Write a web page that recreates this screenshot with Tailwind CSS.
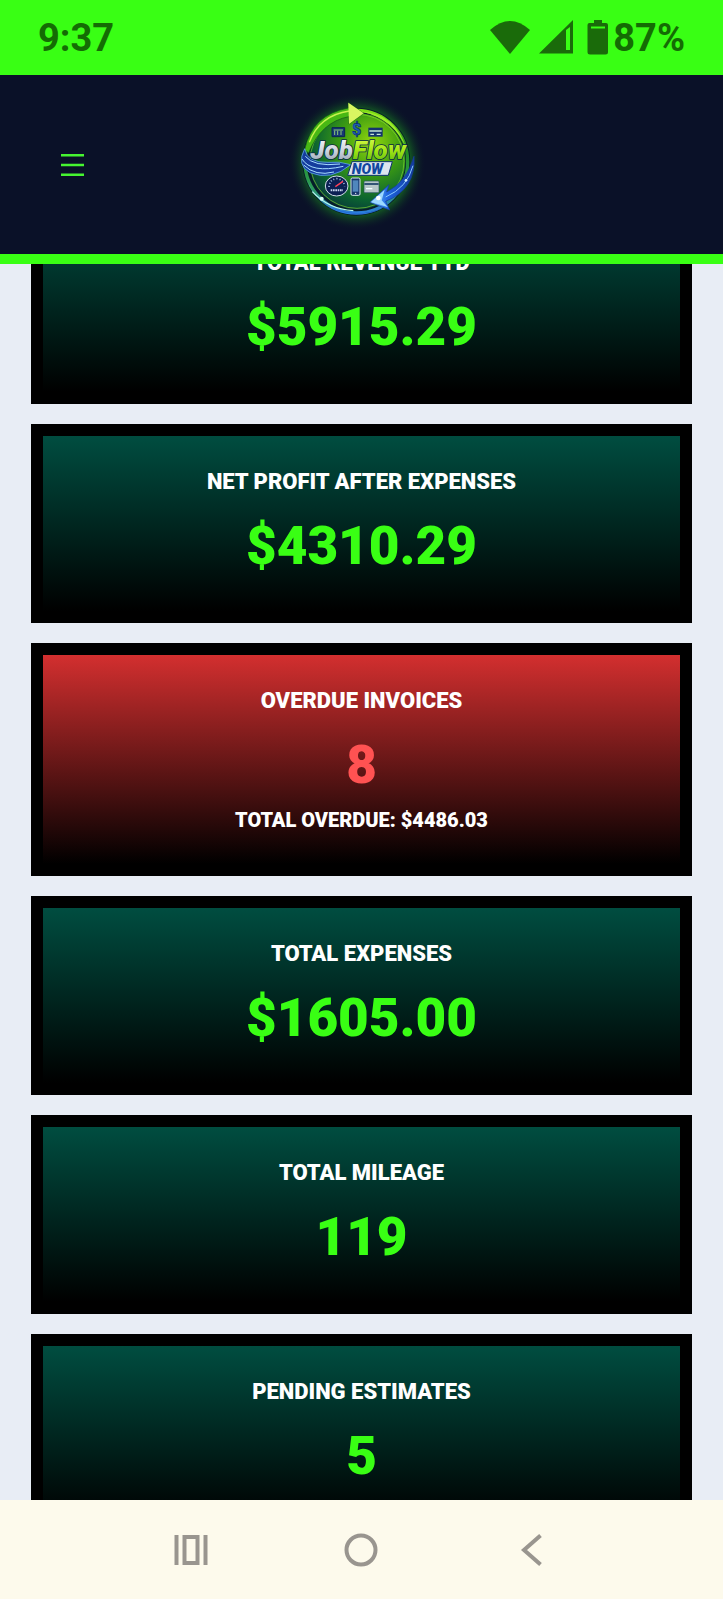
<!DOCTYPE html>
<html lang="en">
<head>
  <meta charset="UTF-8">
  <meta name="viewport" content="width=device-width, initial-scale=1.0">
  <title>JobFlow Now</title>
  <script src="https://cdn.jsdelivr.net/npm/@tailwindcss/browser@4"></script>
</head>
<body class="h-screen flex flex-col overflow-hidden bg-[#e8edf5] font-['Roboto',sans-serif] font-bold">

  <!-- Status bar -->
  <div class="shrink-0 h-[75px] px-[38px] flex items-center justify-between bg-[#39ff14] text-[#146c04] text-[38px] leading-[44px]">
    <span>9:37</span>
    <div class="flex items-center">
      <svg class="w-10 h-9 mr-[9px]" viewBox="0 1 40 36" fill="#1a6b0a"><path d="M0 11Q20 -7 40 11L20 35Z"/></svg>
      <svg class="w-[34px] h-9 mr-[14px]" viewBox="0 2 34 36"><path fill="#1a6b0a" fill-rule="evenodd" d="M0 35.500L34 2V35.500ZM27 12V32H31V9Z"/></svg>
      <svg class="w-[22px] h-9 mr-1" viewBox="0 1 22 36"><path fill="#1a6b0a" fill-rule="evenodd" d="M7 1H15V4H19Q21 4 21 6V33Q21 35.500 18.500 35.500H3Q0.500 35.500 0.500 33V6Q0.500 4 2.500 4H7ZM4 7.500V9.500H18V7.500Z"/></svg>
      <span>87%</span>
    </div>
  </div>

  <!-- Header -->
  <header class="shrink-0 h-[189px] px-[60px] grid grid-cols-3 items-center bg-[#0a1128] border-b-10 border-[#39ff14]">
    <button type="button" aria-label="Menu" class="w-6">
      <svg class="w-6 h-6" viewBox="0 0 24 24" fill="none" stroke="#46f531" stroke-width="2.600"><path d="M1 2.300H24M1 12H24M1 21.700H24"/></svg>
    </button>
    <a href="#" aria-label="JobFlow Now" class="justify-self-center">
      <svg class="w-40 h-[150px]" viewBox="4 16 480 450">
        <defs>
          <radialGradient id="glow"><stop offset=".7" stop-color="#24b51c" stop-opacity=".7"/><stop offset=".84" stop-color="#15721f" stop-opacity=".35"/><stop offset="1" stop-color="#0a1128" stop-opacity="0"/></radialGradient>
          <radialGradient id="disc" cx=".65" cy=".3" r=".8"><stop offset="0" stop-color="#91d70c"/><stop offset=".4" stop-color="#3c9b12"/><stop offset=".75" stop-color="#0b6430"/><stop offset="1" stop-color="#07313c"/></radialGradient>
          <linearGradient id="ring" x2="0" y2="1"><stop offset="0" stop-color="#7fdc16"/><stop offset=".4" stop-color="#238f20"/><stop offset=".75" stop-color="#2d9b58"/><stop offset="1" stop-color="#2b7de0"/></linearGradient>
          <linearGradient id="silver" x2="0" y2="1"><stop offset="0" stop-color="#fff"/><stop offset=".55" stop-color="#cbd3dc"/><stop offset="1" stop-color="#8d9cab"/></linearGradient>
          <linearGradient id="lime" x2="0" y2="1"><stop offset="0" stop-color="#e3ff59"/><stop offset=".5" stop-color="#a5e815"/><stop offset="1" stop-color="#57b80c"/></linearGradient>
          <linearGradient id="blue" x2="1" y2="0"><stop offset="0" stop-color="#7dd0ff"/><stop offset=".4" stop-color="#1d64e0"/><stop offset="1" stop-color="#123a9c"/></linearGradient>
        </defs>
        <circle cx="230" cy="232" r="206" fill="url(#glow)"/>
        <circle cx="227" cy="231" r="162" fill="#061d29"/>
        <circle cx="230" cy="230" r="144" fill="url(#disc)"/>
        <circle cx="227" cy="231" r="154" fill="none" stroke="url(#ring)" stroke-width="10"/>
        <circle cx="229" cy="230" r="141" fill="none" stroke="#8ade31" stroke-opacity=".6" stroke-width="3"/>
        <!-- upper arrow -->
        <path d="M72 195Q94 90 203 70V54L249 86L205 118V96Q121 111 84 205Z" fill="#48b814" stroke="#10521a" stroke-width="2"/>
        <path d="M86 173Q116 92 206 79" fill="none" stroke="#c8f34d" stroke-width="4"/>
        <path d="M203 54L249 86L205 118Z" fill="#d9f661"/>
        <path d="M238 80Q345 84 378 196Q345 104 238 80Z" fill="#9cec28"/>
        <!-- left swoosh -->
        <path d="M72 192Q80 235 142 233Q178 229 210 240Q151 290 88 264Q46 241 72 192Z" fill="#153c9d" stroke="#6cbcff" stroke-width="2"/>
        <path d="M64 223Q91 267 188 245M74 215Q99 247 178 238M69 241Q104 276 160 262" fill="none" stroke="#a6ddff" stroke-width="3"/>
        <!-- lower swooshes -->
        <path d="M77 280Q112 390 251 386Q285 382 306 370Q240 400 163 375Q102 350 77 280Z" fill="url(#blue)"/>
        <path d="M95 321Q144 374 218 378" fill="none" stroke="#b4f6ed" stroke-width="4"/>
        <path d="M400 215Q407 313 315 350L327 376L268 353L325 300L318 322Q377 293 400 215Z" fill="url(#blue)" stroke="#173b9e" stroke-width="2"/>
        <path d="M397 243Q380 309 315 337" fill="none" stroke="#8bcaff" stroke-width="3"/>
        <path d="M272 352L312 315L303 347L322 368Z" fill="#9bd8ff"/>
        <circle cx="123" cy="342" r="6" fill="#d9fff6"/>
        <circle cx="293" cy="340" r="7" fill="#fff"/>
        <circle cx="376" cy="287" r="4" fill="#d4edff"/>
        <!-- calendar, dollar, card -->
        <path d="M154 129H192V156H154Z" fill="#173775" stroke="#0b2353" stroke-width="3"/>
        <path d="M162 138V151M171 138V151M181 138V151M159 136H187" stroke="#8dc878" stroke-width="3"/>
        <text x="214" y="152" font-size="48" font-weight="900" fill="#1d60b6" stroke="#0b2d70" stroke-width="2">$</text>
        <path d="M263 129H306V156H263Z" fill="#14346e"/>
        <path d="M266 139H303M269 149H280M288 149H300" stroke="#c4e4d3" stroke-width="4"/>
        <!-- wordmark -->
        <g font-size="78" font-weight="900" font-style="italic" stroke="#082647" stroke-width="5" stroke-linejoin="round" paint-order="stroke">
          <text x="89" y="222" fill="url(#silver)">Job<tspan fill="url(#lime)">Flow</tspan></text>
        </g>
        <path d="M214 231H335L323 272H201Z" fill="#dce5ef" stroke="#0c326d" stroke-width="3"/>
        <text x="213" y="267" font-size="43" font-weight="900" font-style="italic" fill="#12479f">NOW</text>
        <!-- gauge -->
        <ellipse cx="168" cy="304" rx="34" ry="30" fill="#0b2053" stroke="#d2dce8" stroke-width="3"/>
        <path d="M145 307Q147 284 168 282Q189 284 192 305" fill="none" stroke="#a8c6eb" stroke-width="5" stroke-dasharray="3 6"/>
        <path d="M164 306L187 290" stroke="#ff4057" stroke-width="4"/>
        <path d="M150 317H187" stroke="#c7d8ef" stroke-width="6" stroke-dasharray="5 2"/>
        <!-- phone and card -->
        <rect x="211" y="280" width="27" height="52" rx="4" fill="#17366c" stroke="#d9e6ef" stroke-width="3"/>
        <path d="M216 287H233V321H216Z" fill="#5087bd"/>
        <circle cx="225" cy="326" r="2" fill="#fff"/>
        <rect x="250" y="289" width="45" height="35" rx="3" fill="#b5c6c8" stroke="#23515d" stroke-width="2"/>
        <path d="M251 298H294" stroke="#315475" stroke-width="6"/>
        <path d="M256 312H275" stroke="#f2ffff" stroke-width="4"/>
      </svg>
    </a>
  </header>

  <!-- Dashboard cards, scrolled under the header -->
  <main class="flex-1 min-h-0 overflow-hidden px-[31px]">
    <div class="-mt-[59px] flex flex-col gap-5 text-center text-white uppercase font-black">
      <section class="border-12 border-black bg-linear-to-b/srgb from-[#004d40] to-black pt-[31px] pb-[29px]">
        <h2 class="text-[22px] leading-[30px]">Total Revenue YTD</h2>
        <p class="mt-[14px] text-[53px] leading-[71px] text-[#39ff14]">$5915.29</p>
      </section>
      <section class="border-12 border-black bg-linear-to-b/srgb from-[#004d40] to-black pt-[31px] pb-[29px]">
        <h2 class="text-[22px] leading-[30px]">Net Profit After Expenses</h2>
        <p class="mt-[14px] text-[53px] leading-[71px] text-[#39ff14]">$4310.29</p>
      </section>
      <section class="border-12 border-black bg-linear-to-b/srgb from-[#d32f2f] to-black pt-[31px] pb-[29px]">
        <h2 class="text-[22px] leading-[30px]">Overdue Invoices</h2>
        <p class="mt-[14px] text-[53px] leading-[71px] text-[#ff5252]">8</p>
        <p class="mt-1 text-[20px] leading-[30px]">Total Overdue: $4486.03</p>
      </section>
      <section class="border-12 border-black bg-linear-to-b/srgb from-[#004d40] to-black pt-[31px] pb-[29px]">
        <h2 class="text-[22px] leading-[30px]">Total Expenses</h2>
        <p class="mt-[14px] text-[53px] leading-[71px] text-[#39ff14]">$1605.00</p>
      </section>
      <section class="border-12 border-black bg-linear-to-b/srgb from-[#004d40] to-black pt-[31px] pb-[29px]">
        <h2 class="text-[22px] leading-[30px]">Total Mileage</h2>
        <p class="mt-[14px] text-[53px] leading-[71px] text-[#39ff14]">119</p>
      </section>
      <section class="border-12 border-black bg-linear-to-b/srgb from-[#004d40] to-black pt-[31px] pb-[29px]">
        <h2 class="text-[22px] leading-[30px]">Pending Estimates</h2>
        <p class="mt-[14px] text-[53px] leading-[71px] text-[#39ff14]">5</p>
      </section>
    </div>
  </main>

  <!-- System navigation -->
  <nav class="shrink-0 h-[99px] px-[106px] grid grid-cols-3 items-center justify-items-center bg-[#fdfaec]">
    <button type="button" aria-label="Recent apps">
      <svg class="w-[34px] h-[34px]" viewBox="0 0 34 34" fill="none" stroke="#99958f" stroke-width="4"><path d="M2.500 2V32M31.500 2V32M10.500 4H23.500V30H10.500Z"/></svg>
    </button>
    <button type="button" aria-label="Home">
      <svg class="w-[34px] h-[34px]" viewBox="0 0 34 34" fill="none" stroke="#99958f" stroke-width="4"><circle cx="17" cy="17" r="14.500"/></svg>
    </button>
    <button type="button" aria-label="Back">
      <svg class="w-[34px] h-[34px]" viewBox="0 0 34 34" fill="none" stroke="#99958f" stroke-width="4"><path d="M25.500 2.500L9 17L25.500 31.500"/></svg>
    </button>
  </nav>

</body>
</html>
